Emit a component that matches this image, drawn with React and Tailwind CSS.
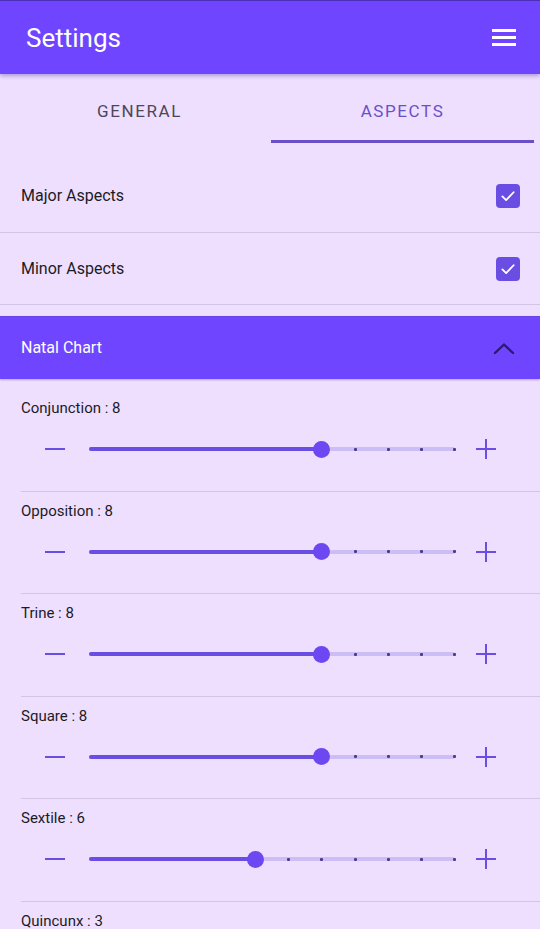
import React, { useState } from "react";

const ASPECTS = [
  { name: "Conjunction", value: 8 },
  { name: "Opposition", value: 8 },
  { name: "Trine", value: 8 },
  { name: "Square", value: 8 },
  { name: "Sextile", value: 6 },
  { name: "Quincunx", value: 3 },
];

const MIN = 1;
const MAX = 12;
const TRACK_W = 366;

const Check = () => (
  <div className="w-6 h-6 rounded-[4px] bg-[#6a4de3] flex items-center justify-center">
    <svg width="18" height="18" viewBox="0 0 24 24" fill="none">
      <path d="M4.5 12.5l5 5L19.5 7" stroke="white" strokeWidth="2.4" strokeLinecap="round" strokeLinejoin="round" />
    </svg>
  </div>
);

const OrbSlider = ({ value }) => {
  const pos = ((value - MIN) / (MAX - MIN)) * TRACK_W;
  const ticks = [];
  for (let v = value + 1; v <= MAX; v++) {
    ticks.push(((v - MIN) / (MAX - MIN)) * TRACK_W);
  }
  return (
    <div className="flex items-center h-10">
      <div className="w-5 ml-[24px] flex items-center">
        <div className="w-5 h-[2px] bg-[#6a4de3]" />
      </div>
      <div className="relative w-[366px] h-10 ml-[24px] flex items-center">
        <div className="absolute left-0 right-0 h-[4px] rounded-full bg-[#cdbdf5]" />
        <div
          className="absolute left-0 h-[4px] rounded-full bg-[#6a4de3]"
          style={{ width: pos }}
        />
        {ticks.map((x, i) => (
          <div
            key={i}
            className="absolute w-[3px] h-[3px] rounded-[1px] bg-[#4b3c8f]"
            style={{ left: x - 1.5 - (i === ticks.length - 1 ? 1 : 0) }}
          />
        ))}
        <div
          className="absolute w-[17px] h-[17px] rounded-full bg-[#6c47f2]"
          style={{ left: pos - 8.5 }}
        />
      </div>
      <div className="relative w-5 h-5 ml-[21px]">
        <div className="absolute left-0 top-[9px] w-5 h-[2px] bg-[#6a4de3]" />
        <div className="absolute left-[9px] top-0 w-[2px] h-5 bg-[#6a4de3]" />
      </div>
    </div>
  );
};

export default function App() {
  const [tab, setTab] = useState(1);

  return (
    <div
      className="w-[540px] h-[929px] overflow-hidden bg-[#eedfff] text-[#1c1b1f]"
      style={{ fontFamily: "Roboto, 'Noto Sans', sans-serif" }}
    >
      {/* App bar */}
      <div className="relative z-10 h-[74px] bg-[#7045ff] border-t border-[#4b2fb8] flex items-center justify-between pl-[26px] pr-[24px] shadow-[0_2px_4px_rgba(60,30,140,0.35)]">
        <div className="text-white text-[26px] leading-none">Settings</div>
        <div className="flex flex-col gap-[4px] w-6">
          <div className="h-[3px] bg-white" />
          <div className="h-[3px] bg-white" />
          <div className="h-[3px] bg-white" />
        </div>
      </div>

      {/* Tabs */}
      <div className="flex h-[70px] pl-[8px] pr-[6px]">
        {["GENERAL", "ASPECTS"].map((t, i) => (
          <button
            key={t}
            onClick={() => setTab(i)}
            className="flex-1 flex flex-col"
          >
            <div
              className={`flex-1 flex items-center justify-center pt-[10px] text-[17px] tracking-[1.6px] ${
                tab === i ? "text-[#6a4fc9]" : "text-[#4d4658]"
              }`}
            >
              {t}
            </div>
            <div
              className={`h-[3px] mb-px ${
                tab === i ? "bg-[#6a4fc9]" : "bg-transparent"
              }`}
            />
          </button>
        ))}
      </div>

      {/* Toggles */}
      <div className="pt-4">
        <div className="h-[73px] flex items-center justify-between pl-[21px] pr-[20px] border-b border-[#d2c5e6]">
          <span className="text-[16px]">Major Aspects</span>
          <Check />
        </div>
        <div className="h-[72px] flex items-center justify-between pl-[21px] pr-[20px] border-b border-[#d2c5e6]">
          <span className="text-[16px]">Minor Aspects</span>
          <Check />
        </div>
      </div>

      {/* Natal chart panel */}
      <div className="mt-[11px] h-[63px] bg-[#7045ff] flex items-center justify-between pl-[21px] pr-[24px] border-t border-[#6a45e6] shadow-[0_1px_2px_rgba(60,30,140,0.3)]">
        <span className="text-white text-[16px]">Natal Chart</span>
        <svg width="24" height="24" viewBox="0 0 24 24" fill="none">
          <path d="M3 17l9-8.5 9 8.5" stroke="#2b1b6e" strokeWidth="2.4" strokeLinecap="round" strokeLinejoin="round" />
        </svg>
      </div>

      <div className="pt-[10px]">
        {ASPECTS.map((a) => (
          <div key={a.name} className="ml-[21px] pt-[10px] pb-[21.5px] border-b border-[#d2c5e6]">
            <div className="text-[15px] leading-[18px]">
              {a.name} : {a.value}
            </div>
            <div className="mt-[12px]">
              <OrbSlider value={a.value} />
            </div>
          </div>
        ))}
      </div>
    </div>
  );
}
